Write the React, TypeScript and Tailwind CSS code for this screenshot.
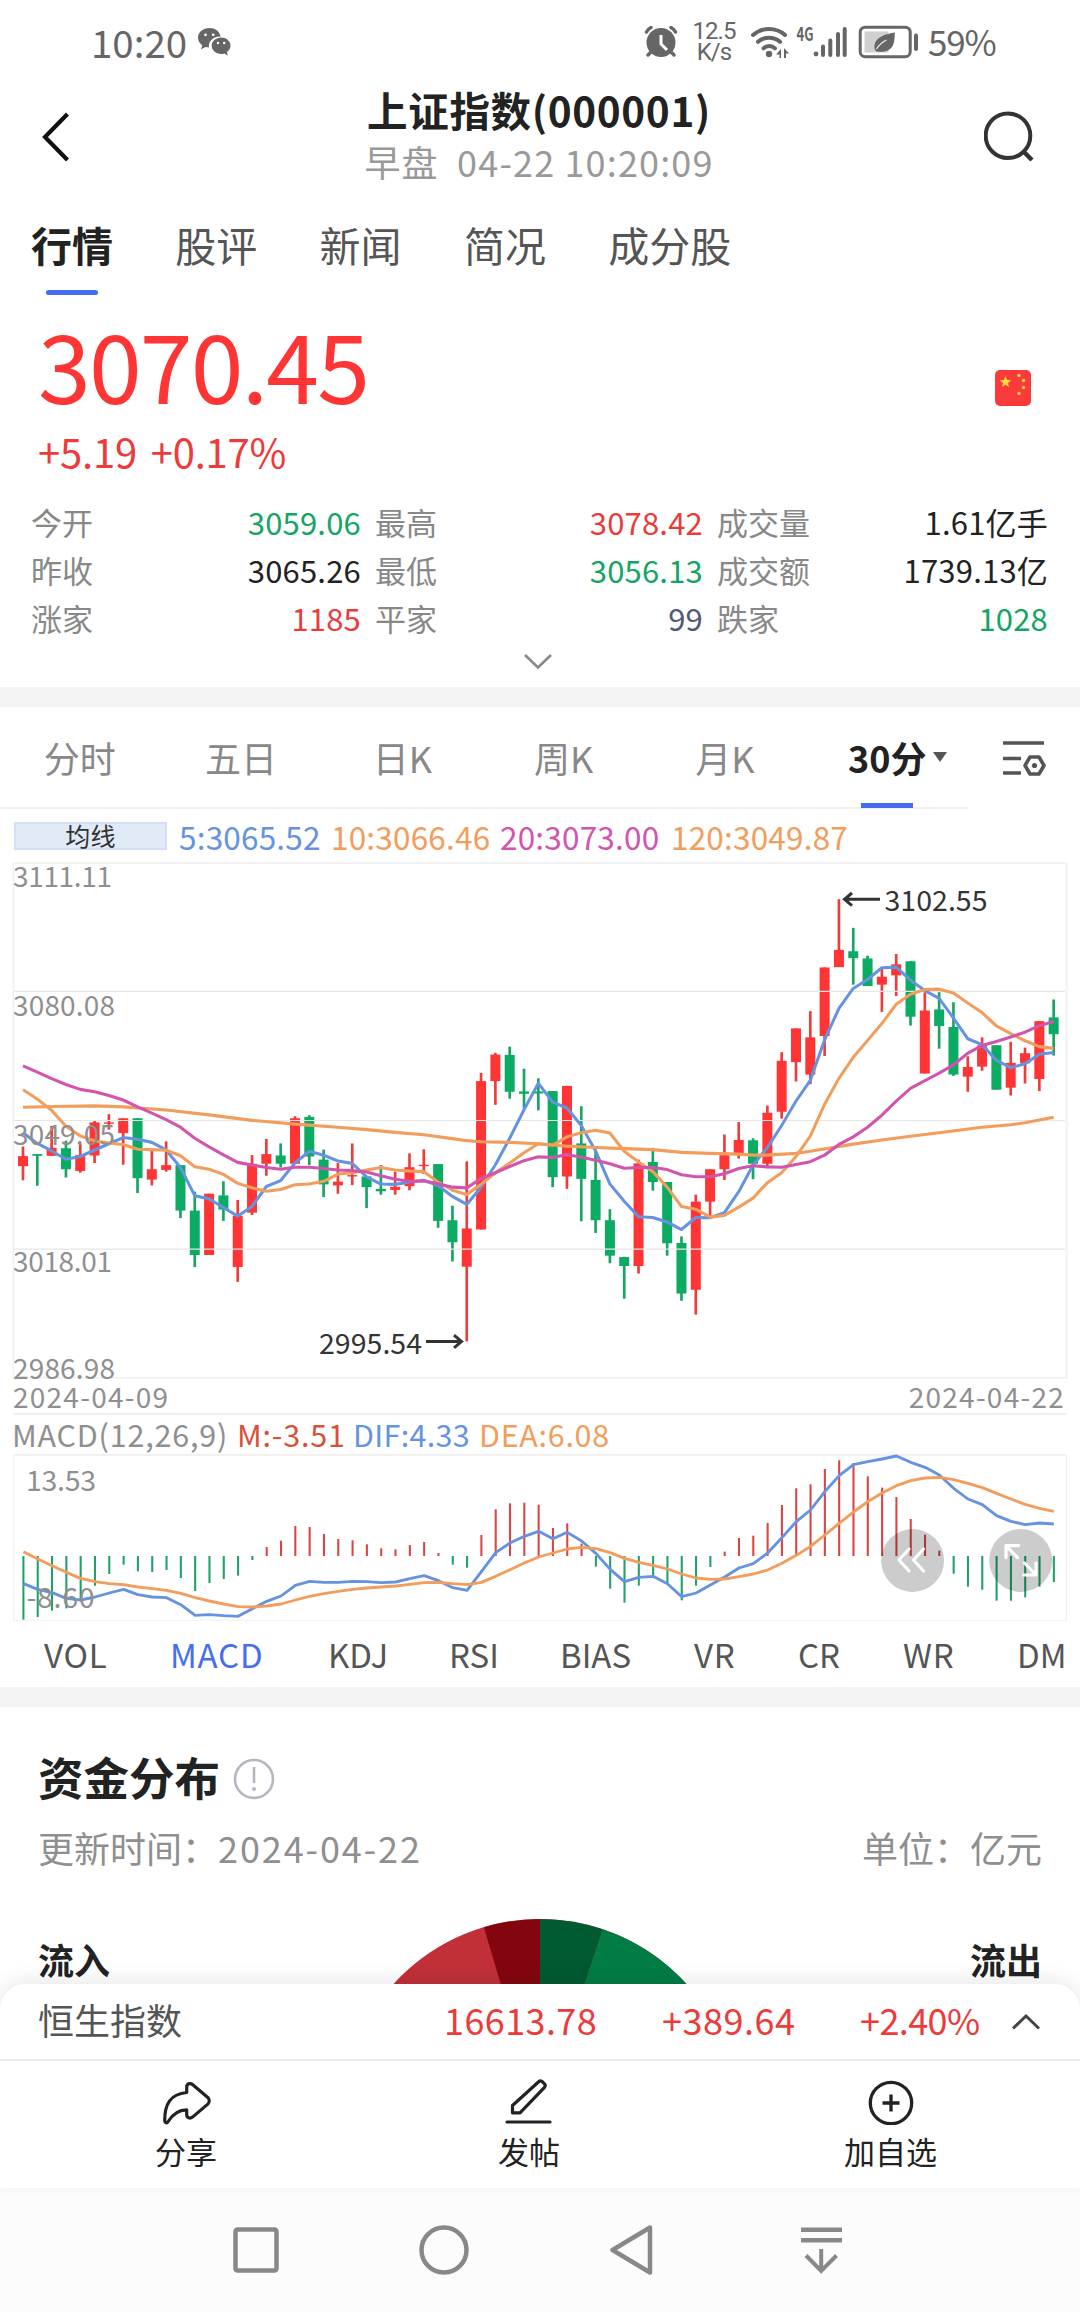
import React from "react";

type Candle = [up: 0 | 1, high: number, top: number, bottom: number, low: number];

// Candle extents in plot units (3240 x 1568 units cover 1080 x 540 px).
const CANDLES: Candle[] = [
  [1, 832, 860, 889, 930], [0, 854, 854, 859, 946], [1, 772, 836, 859, 859], [0, 815, 837, 898, 922],
  [1, 825, 857, 903, 908], [1, 758, 762, 858, 880], [1, 738, 762, 766, 783], [1, 750, 750, 793, 885],
  [0, 750, 750, 924, 967], [1, 845, 898, 928, 945], [1, 817, 886, 900, 905], [0, 886, 886, 1018, 1040],
  [0, 963, 1018, 1147, 1182], [1, 969, 969, 1147, 1147], [0, 933, 974, 1015, 1048], [1, 987, 1033, 1182, 1225],
  [1, 857, 882, 1024, 1031], [1, 810, 854, 882, 917], [0, 823, 858, 882, 893], [1, 744, 750, 882, 882],
  [0, 741, 746, 861, 886], [0, 841, 870, 942, 979], [1, 880, 934, 945, 969], [1, 823, 915, 919, 944],
  [0, 918, 919, 950, 1011], [0, 886, 955, 962, 972], [1, 905, 949, 958, 972], [1, 852, 892, 947, 959],
  [1, 840, 885, 889, 912], [0, 883, 883, 1048, 1068], [0, 1004, 1046, 1110, 1166], [1, 875, 1070, 1181, 1398],
  [1, 618, 642, 1073, 1073], [1, 560, 565, 642, 711], [0, 542, 566, 673, 693], [0, 606, 672, 679, 720],
  [0, 634, 672, 678, 727], [0, 671, 671, 921, 950], [1, 656, 656, 919, 955], [0, 715, 823, 926, 1049],
  [0, 840, 929, 1046, 1083], [0, 1014, 1046, 1149, 1171], [0, 1152, 1153, 1179, 1274], [1, 870, 881, 1179, 1201],
  [0, 836, 877, 935, 960], [0, 935, 935, 1113, 1149], [0, 1093, 1112, 1259, 1280], [1, 972, 992, 1248, 1320],
  [1, 898, 898, 992, 1035], [1, 797, 857, 898, 929], [1, 761, 813, 851, 867], [0, 808, 814, 882, 927],
  [1, 713, 734, 882, 895], [1, 558, 583, 731, 751], [1, 489, 489, 587, 643], [1, 439, 515, 623, 651],
  [1, 312, 312, 511, 569], [1, 114, 261, 311, 311], [0, 197, 265, 285, 362], [0, 278, 286, 366, 366],
  [1, 315, 339, 362, 441], [1, 273, 303, 335, 395], [0, 294, 294, 455, 481], [1, 384, 437, 620, 620],
  [0, 384, 434, 482, 548], [0, 413, 485, 623, 627], [1, 570, 601, 629, 673], [1, 515, 538, 600, 612],
  [0, 538, 538, 667, 667], [1, 528, 589, 661, 684], [1, 545, 561, 590, 649], [1, 468, 468, 636, 671],
  [0, 405, 457, 506, 568],
];

const MA5 = [792, 823, 845, 869, 861, 842, 824, 806, 811, 820, 842, 893, 975, 984, 1009, 1034, 1006, 948, 931, 880, 846, 857, 874, 881, 920, 941, 942, 935, 930, 945, 977, 1000, 950, 885, 808, 725, 648, 703, 720, 771, 845, 941, 991, 1036, 1038, 1051, 1073, 1038, 1039, 1024, 963, 886, 835, 771, 700, 640, 522, 431, 373, 347, 313, 311, 349, 379, 402, 459, 519, 536, 582, 603, 592, 564, 559];
const MA10 = [667, 694, 727, 773, 801, 816, 822, 826, 840, 841, 843, 859, 891, 898, 913, 939, 952, 962, 957, 943, 941, 933, 912, 908, 900, 893, 900, 903, 905, 935, 959, 971, 942, 908, 880, 850, 824, 828, 804, 792, 785, 793, 846, 877, 905, 950, 1006, 1014, 1037, 1032, 1008, 982, 937, 908, 861, 802, 709, 634, 573, 524, 475, 419, 390, 376, 375, 386, 415, 443, 482, 504, 525, 542, 547];
const MA20 = [598, 616, 635, 652, 666, 673, 684, 697, 717, 735, 754, 776, 808, 833, 856, 878, 886, 893, 898, 892, 892, 896, 900, 902, 906, 917, 927, 933, 932, 940, 950, 952, 925, 908, 890, 873, 862, 864, 855, 863, 872, 882, 895, 893, 893, 899, 914, 920, 920, 911, 896, 888, 891, 892, 884, 876, 857, 826, 804, 776, 741, 700, 663, 641, 619, 595, 561, 539, 527, 514, 500, 481, 469];
const MA120: [number, number][] = [[0, 718], [3, 715], [5, 714], [7, 717], [10, 726], [13, 740], [16, 756], [19, 767], [22, 776], [24, 783], [26, 791], [28, 798], [30, 809], [31, 815], [32, 818], [34, 820], [36, 824], [38, 831], [40, 835], [42, 838], [44, 841], [46, 849], [48, 852], [50, 854], [51, 857], [52, 857], [54, 852], [55, 846], [58, 825], [60, 813], [62, 802], [64, 792], [67, 776], [69, 769], [70, 763], [72, 747]];

// MACD plot units: 3136 x 990 units cover 1080 x 330 px.
const BARS = [749, 741, 722, 715, 690, 647, 612, 584, 604, 606, 600, 624, 663, 639, 627, 617, 570, 531, 512, 468, 471, 492, 507, 511, 523, 535, 538, 525, 516, 549, 584, 593, 495, 418, 400, 398, 404, 474, 460, 521, 590, 656, 698, 647, 617, 640, 691, 647, 591, 545, 504, 497, 459, 405, 355, 343, 297, 271, 279, 319, 353, 381, 447, 494, 542, 611, 650, 659, 692, 692, 682, 650, 636];
const DIF = [641, 658, 668, 685, 690, 681, 669, 658, 674, 681, 683, 704, 736, 734, 737, 739, 716, 694, 678, 646, 634, 637, 637, 634, 635, 638, 636, 626, 617, 632, 653, 661, 605, 548, 519, 499, 484, 506, 487, 513, 550, 598, 635, 622, 619, 641, 680, 669, 645, 621, 594, 581, 549, 503, 455, 420, 365, 317, 284, 275, 267, 258, 277, 292, 315, 355, 387, 404, 437, 454, 464, 459, 462];
const DEA = [545, 567, 587, 607, 625, 635, 641, 644, 651, 656, 661, 670, 683, 693, 702, 710, 711, 708, 702, 690, 679, 671, 664, 658, 654, 651, 648, 643, 638, 637, 641, 644, 637, 619, 599, 579, 561, 549, 537, 532, 536, 548, 565, 577, 586, 597, 612, 624, 628, 627, 620, 612, 600, 580, 556, 529, 495, 460, 426, 395, 369, 347, 332, 324, 322, 329, 340, 353, 370, 387, 403, 415, 424];

const BLUE = "#6693df";
const ORANGE = "#f29d5b";
const PINK = "#d354ae";

const kx = (i: number) => 69 + 42.944 * i;
const mx = (i: number) => 68 + 41.556 * i;
const line = (ys: number[], fx: (i: number) => number) => ys.map((y, i) => `${fx(i).toFixed(1)},${y}`).join(" ");

function KLineChart() {
  const labels: [string, number, number][] = [
    ["3111.11", 24, 97], ["3080.08", 153, 100], ["3049.05", 282, 100], ["3018.01", 409.5, 97], ["2986.98", 516, 100],
  ];
  return (
    <div className="relative h-[517px] w-full shrink-0">
      <svg className="block h-full w-full" viewBox="0 5.8 3240 1501.3" preserveAspectRatio="none">
        {CANDLES.map(([up, h, t, b, l], i) => (
          <g key={i} fill={up ? "#ff3434" : "#0bab64"}>
            <rect x={kx(i) - 4} y={h} width={8} height={l - h} fill={up ? "#ee3c3c" : "#17a565"} />
            <rect x={kx(i) - 15} y={t} width={30} height={b - t} />
          </g>
        ))}
        <g stroke="#e6e6e6" strokeWidth={3}>
          <line x1={40} x2={3195} y1={381.5} y2={381.5} />
          <line x1={40} x2={3195} y1={756.5} y2={756.5} />
          <line x1={40} x2={3195} y1={1130} y2={1130} />
        </g>
        <rect x={40} y={9} width={3160} height={1494.5} fill="none" stroke="#f1f1f1" strokeWidth={5} />
        <g fill="none" strokeWidth={9} strokeLinejoin="round">
          <polyline points={line(MA5, kx)} stroke={BLUE} />
          <polyline points={line(MA10, kx)} stroke={ORANGE} />
          <polyline points={MA120.map(([i, y]) => `${kx(i).toFixed(1)},${y}`).join(" ")} stroke={ORANGE} />
          <polyline points={line(MA20, kx)} stroke={PINK} />
        </g>
      </svg>
      <svg className="absolute inset-0 h-full w-full overflow-visible" viewBox="0 0 1080 517">
        <g fill="#8f8f8f" fontSize={28}>
          {labels.map(([t, y, w]) => (
            <text key={t} x={13} y={y + 0.5} textLength={w + 2}>{t}</text>
          ))}
        </g>
        <g fill="#333" fontSize={28.5}>
          <text x={884.5} y={49} textLength={103}>3102.55</text>
          <text x={319} y={491.5} textLength={103}>2995.54</text>
        </g>
        <g fill="none" stroke="#333" strokeWidth={3}>
          <path d="M880 37.3H845M852 31l-7.5 6.3 7.5 6.3" />
          <path d="M426 479.5H461M454 473.2l7.5 6.3-7.5 6.3" />
        </g>
      </svg>
    </div>
  );
}

function MacdChart() {
  return (
    <div className="relative h-[168px] w-full shrink-0">
      <svg className="block h-full w-full" viewBox="0 252 3136 504" preserveAspectRatio="none">
        <line x1={38} x2={3098} y1={255} y2={255} stroke="#f1f1f1" strokeWidth={6} />
        <path d="M39.5 255V751H3097V255" fill="none" stroke="#f1f1f1" strokeWidth={3} />
        {BARS.map((y, i) => (
          <rect
            key={i}
            x={mx(i) - 3}
            width={6}
            y={Math.min(558, y)}
            height={Math.abs(558 - y)}
            fill={y < 558 ? "#dc4444" : "#1fa269"}
          />
        ))}
        <g fill="none" strokeWidth={8.5} strokeLinejoin="round">
          <polyline points={line(DIF, mx)} stroke={BLUE} />
          <polyline points={line(DEA, mx)} stroke={ORANGE} />
        </g>
      </svg>
      <svg className="absolute inset-0 h-full w-full" viewBox="0 0 1080 168">
        <g fill="#8f8f8f" fontSize={28.5}>
          <text x={26} y={36.5} textLength={70}>13.53</text>
          <text x={26.5} y={154} textLength={68}>-8.60</text>
        </g>
        <circle cx={912.6} cy={106.5} r={31.5} fill="#000" fillOpacity={0.2} />
        <circle cx={1020.7} cy={106.5} r={31.5} fill="#000" fillOpacity={0.2} />
        <g fill="none" stroke="#fff" strokeWidth={3.2} strokeLinecap="round" strokeLinejoin="round">
          <path d="M909 95l-10 11 10 11M923.5 95l-10 11 10 11" />
          <path d="M1018.5 91.7H1006v12M1007 92.7l10.5 11M1023.5 121H1036v-12M1035 120l-10.5-11" />
        </g>
      </svg>
    </div>
  );
}

function StatusBar() {
  return (
    <div className="flex h-[83px] shrink-0 items-center pl-[91px] text-[#666]">
      <span className="w-[107px] text-[38.5px] leading-none">10:20</span>
      <svg className="h-[28px] w-[33px]" viewBox="0 0 33 28" fill="#666">
        <path d="M11.5 0C5 0 0 4.3 0 9.800c0 3.200 1.700 5.800 4.300 7.600l-1.300 4 4.500-2.400c1.200.3 2.300.5 3.500.5C10 13.500 15 8 22.600 8.400 21.600 3.500 17 0 11.500 0z" />
        <path d="M32.500 17.600c0-4.700-4.500-8-9.300-8-5.300 0-9.500 3.600-9.500 8.200s4.200 8.200 9.500 8.200c1.100 0 2.200-.3 3.200-.6l3.400 2-.9-3.300c2.200-1.600 3.600-3.900 3.600-6.500z" />
        <g fill="#fff"><circle cx="7.500" cy="6.800" r="1.400" /><circle cx="15.200" cy="6.800" r="1.400" /><circle cx="20" cy="15" r="1.200" /><circle cx="26.200" cy="15" r="1.200" /></g>
      </svg>
      <svg className="ml-[413px] h-[31px] w-[34px]" viewBox="0 0 34 31" fill="none" stroke="#666">
        <circle cx="17" cy="16.500" r="14.500" fill="#666" stroke="none" />
        <g strokeWidth="3.400" strokeLinecap="round"><path d="M2.500 6C3.500 4 5 2.500 7 1.500M31.500 6C30.500 4 29 2.500 27 1.500M6.500 26.500 4 29M27.500 26.500 30 29" /></g>
        <path d="M17 9v9l6 6" stroke="#fff" strokeWidth="3" />
      </svg>
      <div className="ml-[13px] flex w-[46px] flex-col items-center font-['Roboto'] text-[24px] leading-[21px] tracking-[-0.9px]">
        <span>12.5</span>
        <span>K/s</span>
      </div>
      <svg className="ml-[13px] h-[34px] w-[100px]" viewBox="749 23 100 34" fill="none" stroke="#666">
        <g strokeWidth="4" strokeLinecap="round">
          <path d="M752 33c9-8 23-8 32 0M757 39.800c6-5.500 16-5.500 22 0M762.500 46.300c3-3 8.500-3 11.500 0" />
          <path d="M822 44.500V53M829.300 38.500V53M837 32V53M843.700 27V53" strokeWidth="4" />
        </g>
        <g fill="#666" stroke="none">
          <circle cx="768" cy="52" r="3.200" /><circle cx="815" cy="52" r="2.400" />
          <path d="M780 47v9h-1.500v-3.500h-3.500zM783 46l5 5.500h-3V56h-2z" />
          <text x="795.500" y="38.500" fontSize="19" fontWeight="700" textLength="17" lengthAdjust="spacingAndGlyphs">4G</text>
        </g>
      </svg>
      <svg className="ml-[8px] h-[34px] w-[62px]" viewBox="0 0 62 34">
        <rect x="2.200" y="2.200" width="50" height="29.500" rx="5" fill="none" stroke="#666" strokeWidth="3" />
        <rect x="6.500" y="6.500" width="24" height="21" fill="#d0d0d0" />
        <path d="M37 7.500C28 9 18 11.500 16.500 20c-.4 2.800.2 4.800 1.500 6.200 9 2.200 16.500-1.200 18-9.200.6-3.300.6-6.500 1-9.500z" fill="#666" />
        <path d="M18.500 24c2.500-4 6-7 10-9" stroke="#eee" strokeWidth="1.300" fill="none" />
        <rect x="56" y="8.500" width="4" height="17.500" rx="2" fill="#666" />
      </svg>
      <span className="mb-[2px] ml-[8px] text-[35px] leading-none tracking-[-1.2px]">59%</span>
    </div>
  );
}

function Header() {
  return (
    <div className="flex h-[102px] shrink-0 justify-between pr-[46px] pl-[40px]">
      <svg className="mt-[29px] h-[50px] w-[32px]" viewBox="0 0 32 50" fill="none" stroke="#111" strokeWidth="4.200">
        <path d="M27.500 2 5 25l22.500 23" />
      </svg>
      <div className="flex flex-col items-center pt-[1px] pl-[22px] whitespace-pre">
        <div className="h-[52px] text-[40.5px] leading-[52px] font-bold tracking-[0.65px] text-[#222]">上证指数(000001)</div>
        <div className="h-[50px] text-[36px] leading-[50px] tracking-[1.15px] text-[#999]">早盘  04-22 10:20:09</div>
      </div>
      <svg className="mt-[27px] h-[54px] w-[50px]" viewBox="984 110 50 54" fill="none" stroke="#333" strokeWidth="4">
        <circle cx="1008" cy="135.700" r="22.300" />
        <path d="M1023.500 151.500 1032 160" strokeWidth="4.500" />
      </svg>
    </div>
  );
}

function Tabs() {
  return (
    <div className="flex h-[110px] shrink-0 gap-[62.3px] pt-[29px] pl-[31px] text-[41px] leading-[60px] text-[#555]">
      <div className="flex flex-col items-center font-bold text-[#222]">
        行情
        <span className="mt-[16px] h-[5px] w-[52px] rounded-full bg-[#456eee]" />
      </div>
      {["股评", "新闻", "简况", "成分股"].map((t) => (
        <div key={t}>{t}</div>
      ))}
    </div>
  );
}

const STATS: [string, string, string][][] = [
  [["今开", "3059.06", "text-[#14a562]"], ["最高", "3078.42", "text-[#e83c3c]"], ["成交量", "1.61亿手", "text-[#222]"]],
  [["昨收", "3065.26", "text-[#222]"], ["最低", "3056.13", "text-[#14a562]"], ["成交额", "1739.13亿", "text-[#222]"]],
  [["涨家", "1185", "text-[#e83c3c]"], ["平家", "99", "text-[#555a77]"], ["跌家", "1028", "text-[#14a562]"]],
];

function Quote() {
  return (
    <div className="h-[392px] shrink-0 pt-[13px]">
      <div className="flex justify-between">
        <div>
          <div className="h-[110px] pl-[38px] text-[95px] leading-[110px] tracking-[-1.8px] text-[#ff3535]">3070.45</div>
          <div className="mt-[3px] h-[60px] pl-[38px] text-[40px] leading-[60px] tracking-[-0.2px] text-[#ec3b3b] [word-spacing:5px]">+5.19 +0.17%</div>
        </div>
        <svg className="mt-[62px] mr-[49px] h-[36px] w-[36px]" viewBox="0 0 36 36">
          <rect width="36" height="36" rx="5" fill="#fb3b3b" />
          <g fill="#ffd83b">
            <path d="M10.500 6l1.600 3.900 4.100.3-3.200 2.700 1 4.100-3.500-2.200L7 17l1-4.100-3.200-2.700 4.100-.3z" />
            <circle cx="24" cy="5.500" r="1.700" /><circle cx="28.500" cy="10.500" r="1.700" /><circle cx="28.500" cy="17.500" r="1.700" /><circle cx="24" cy="23.500" r="1.700" />
          </g>
        </svg>
      </div>
      <div className="mt-[17px] flex flex-col pl-[31px]">
        {STATS.map((row, r) => (
          <div key={r} className="grid h-[48px] grid-cols-[330px_328px_331px] gap-x-[14px] text-[31px] leading-[48px]">
            {row.map(([k, v, c]) => (
              <div key={k} className="flex justify-between">
                <span className="text-[#888]">{k}</span>
                <span className={`tracking-[0.2px] ${c}`}>{v}</span>
              </div>
            ))}
          </div>
        ))}
      </div>
      <svg className="ml-[523px] mt-[11px] block h-[17px] w-[30px]" viewBox="0 0 30 17" fill="none" stroke="#888" strokeWidth="2.600">
        <path d="M2 2l13 12.500L28 2" />
      </svg>
    </div>
  );
}

function PeriodBar() {
  return (
    <div className="flex h-[102px] shrink-0">
      <div className="grid w-[968px] grid-cols-6 border-b-2 border-[#efefef] text-[36px] leading-[100px] text-[#888]">
        {["分时", "五日", "日K", "周K", "月K"].map((t) => (
          <div key={t} className="pr-[2px] text-center">{t}</div>
        ))}
        <div className="relative text-center font-bold text-[#222]">
          30分
          <span className="absolute top-[45px] right-[21px] h-0 w-0 border-x-[7px] border-t-[10px] border-x-transparent border-t-[#555]" />
          <span className="absolute bottom-[-1px] left-[54px] h-[5px] w-[52px] bg-[#456eee]" />
        </div>
      </div>
      <svg className="mt-[33px] ml-[34px] h-[38px] w-[46px]" viewBox="0 0 46 38" fill="none" stroke="#555" strokeWidth="3.600">
        <path d="M1 3h41M1 18.500h18M1 33h18" />
        <path d="M28 17h9l5 8.500-5 8.500h-9l-5-8.500z" strokeLinejoin="round" />
        <circle cx="32.500" cy="25.500" r="2.600" fill="#555" stroke="none" />
      </svg>
    </div>
  );
}

function MaLegend() {
  return (
    <div className="flex h-[53px] shrink-0 items-start pt-[13px] pl-[14px] text-[31.5px] leading-[28px] tracking-[0.2px]">
      <div className="h-[28px] w-[153px] border-2 border-[#d2dffa] bg-[#e1eaf7] text-center text-[25px] leading-[23px] text-[#333]">均线</div>
      <span className="ml-[12px] w-[152px] text-[#6693df]">5:3065.52</span>
      <span className="w-[169px] text-[#f29d5b]">10:3066.46</span>
      <span className="w-[171px] text-[#d354ae]">20:3073.00</span>
      <span className="text-[#f29d5b]">120:3049.87</span>
    </div>
  );
}

const INDICATORS: [string, string][] = [
  ["VOL", "w-[126px] tracking-[0.8px]"],
  ["MACD", "w-[158px] text-[#456eee] tracking-[0.8px]"],
  ["KDJ", "w-[121px]"],
  ["RSI", "w-[111px]"],
  ["BIAS", "w-[134px]"],
  ["VR", "w-[104px] tracking-[0.8px]"],
  ["CR", "w-[105px]"],
  ["WR", "w-[114px] tracking-[0.8px]"],
  ["DM", "w-[50px]"],
];

function IndicatorTabs() {
  return (
    <div className="flex h-[65px] w-[1070px] shrink-0 pl-[44px] text-[33px] leading-[65px] text-[#555]">
      {INDICATORS.map(([t, cls]) => (
        <span key={t} className={`shrink-0 ${cls}`}>{t}</span>
      ))}
    </div>
  );
}

function FundSection() {
  return (
    <div className="h-[277px] shrink-0 overflow-hidden px-[38px] pt-[36px]">
      <div className="flex h-[66px] items-center">
        <span className="text-[45.5px] leading-[66px] font-bold text-[#222]">资金分布</span>
        <svg className="mt-[6px] ml-[13px] h-[42px] w-[42px]" viewBox="0 0 42 42" fill="none" stroke="#b4b7c1" strokeWidth="2.600">
          <circle cx="21" cy="21" r="19" />
          <path d="M21 9v16" />
          <circle cx="21" cy="31" r="2" fill="#b4b7c1" stroke="none" />
        </svg>
      </div>
      <div className="mt-[13px] flex h-[50px] justify-between text-[36px] leading-[50px] text-[#8f8f8f]">
        <span>更新时间：<span className="tracking-[1.9px]">2024-04-22</span></span>
        <span>单位：亿元</span>
      </div>
      <div className="mt-[47px] flex h-[65px] items-end justify-between text-[36px] leading-[50px] font-bold text-[#222]">
        <span>流入</span>
        <svg className="h-[65px] w-[400px]" viewBox="0 0 400 65">
          <circle cx="200" cy="197.500" r="197.500" fill="#c13039" />
          <path d="M200 197.500V0A197.500 197.500 0 0 0 143.900 8.200z" fill="#83060f" />
          <path d="M200 197.500V0A197.500 197.500 0 0 1 262.900 10.300z" fill="#005a32" />
          <path d="M200 197.500 262.900 10.300A197.500 197.500 0 0 1 397.500 197.500z" fill="#007c44" />
        </svg>
        <span>流出</span>
      </div>
    </div>
  );
}

function BottomSheet() {
  return (
    <div className="relative z-10 h-[204px] shrink-0 rounded-t-[26px] bg-white shadow-[0_-4px_20px_rgba(0,0,0,0.09)]">
      <div className="flex h-[77px] border-b-2 border-[#ececec] pl-[38px] text-[36px] leading-[70px] text-[#ec3b3b]">
        <span className="w-[406px] text-[#555]">恒生指数</span>
        <span className="w-[218px] tracking-[0.4px]">16613.78</span>
        <span className="w-[198px] tracking-[0.5px]">+389.64</span>
        <span className="w-[151px] tracking-[-0.6px]">+2.40%</span>
        <svg className="mt-[29px] h-[17px] w-[30px]" viewBox="0 0 30 17" fill="none" stroke="#444" strokeWidth="3">
          <path d="M2 15.500 15 3l13 12.500" />
        </svg>
      </div>
      <div className="flex pt-[18px] pl-[155px] text-[31px] leading-[40px] text-[#222]">
        <div className="flex w-[62px] flex-col items-center">
          <svg className="h-[46px] w-[52px]" viewBox="161 2079 52 46" fill="none" stroke="#222" strokeWidth="3.200" strokeLinejoin="round">
            <path d="M187.700 2092.500v-5.200c0-3.600 3.400-4.700 5.800-2.700l15.300 12.900c1.900 1.900 1.900 4.700 0 6.600l-15.300 13c-2.600 2-5.800.6-5.800-2.700v-4.600c-8.500 0-14 4-18.700 12-1 1.700-3.300 1.200-3.300-1-.2-16 5-26.800 22-28.300z" />
          </svg>
          <span className="mt-[6px] whitespace-nowrap">分享</span>
        </div>
        <div className="ml-[281px] flex w-[62px] flex-col items-center">
          <svg className="h-[46px] w-[50px]" viewBox="502 2079 50 46" fill="none" stroke="#222" strokeWidth="3.200" strokeLinejoin="round">
            <path d="M510.500 2105.500v7.300h7.500l24.500-25.500c1-1.200 1-2.300 0-3.300l-2-2.200c-1.200-1.300-2.600-1.300-3.800 0z" />
            <path d="M505 2122H548" strokeLinecap="round" />
          </svg>
          <span className="mt-[6px] whitespace-nowrap">发帖</span>
        </div>
        <div className="ml-[284px] flex w-[93px] flex-col items-center">
          <svg className="h-[46px] w-[46px]" viewBox="0 0 46 46" fill="none" stroke="#222" strokeWidth="3.300">
            <circle cx="23" cy="24" r="20.700" />
            <path d="M23 15.500v17M14.500 24h17" />
          </svg>
          <span className="mt-[6px] whitespace-nowrap">加自选</span>
        </div>
      </div>
    </div>
  );
}

function NavBar() {
  return (
    <div className="flex h-[124px] shrink-0 items-center bg-[#fcfcfc] pl-[233px]">
      <svg className="h-[46px] w-[46px]" viewBox="0 0 46 46" fill="none" stroke="#888" strokeWidth="4.500">
        <rect x="2.500" y="2.500" width="41" height="41" rx="2" />
      </svg>
      <svg className="ml-[140px] h-[50px] w-[50px]" viewBox="0 0 50 50" fill="none" stroke="#888" strokeWidth="4.500">
        <circle cx="25" cy="25" r="22.500" />
      </svg>
      <svg className="ml-[140px] h-[52px] w-[44px]" viewBox="0 0 44 52" fill="none" stroke="#888" strokeWidth="4.500" strokeLinejoin="round">
        <path d="M41 3.500v45L3.500 26z" />
      </svg>
      <svg className="ml-[148px] h-[50px] w-[41px]" viewBox="0 0 41 50" fill="none" stroke="#888" strokeWidth="4.500">
        <path d="M0 4.700h41M0 15.300h41" />
        <path d="M20.200 24v22M5 30.500 20.200 46 35.500 30.500" strokeWidth="4" />
      </svg>
    </div>
  );
}

export default function App() {
  return (
    <div className="flex h-[2312px] w-[1080px] flex-col overflow-hidden bg-white font-['Noto_Sans_CJK_SC',sans-serif]">
      <StatusBar />
      <Header />
      <Tabs />
      <Quote />
      <div className="h-[20px] shrink-0 bg-[#f4f4f4]" />
      <PeriodBar />
      <MaLegend />
      <KLineChart />
      <div className="ml-[13px] flex h-[36px] w-[1054px] shrink-0 justify-between border-b-2 border-[#f1f1f1] pr-[2px] text-[28px] leading-[34px] tracking-[1.25px] text-[#8f8f8f]">
        <span>2024-04-09</span>
        <span>2024-04-22</span>
      </div>
      <div className="flex h-[39px] shrink-0 pl-[12px] text-[30.5px] leading-[39px]">
        <span className="w-[225px] tracking-[0.8px] text-[#8f8f8f]">MACD(12,26,9)</span>
        <span className="w-[116px] tracking-[0.8px] text-[#da5037]">M:-3.51</span>
        <span className="w-[126px] tracking-[0.3px] text-[#6693df]">DIF:4.33</span>
        <span className="tracking-[0.7px] text-[#f29d5b]">DEA:6.08</span>
      </div>
      <MacdChart />
      <IndicatorTabs />
      <div className="h-[20px] shrink-0 bg-[#f4f4f4]" />
      <FundSection />
      <BottomSheet />
      <NavBar />
    </div>
  );
}
